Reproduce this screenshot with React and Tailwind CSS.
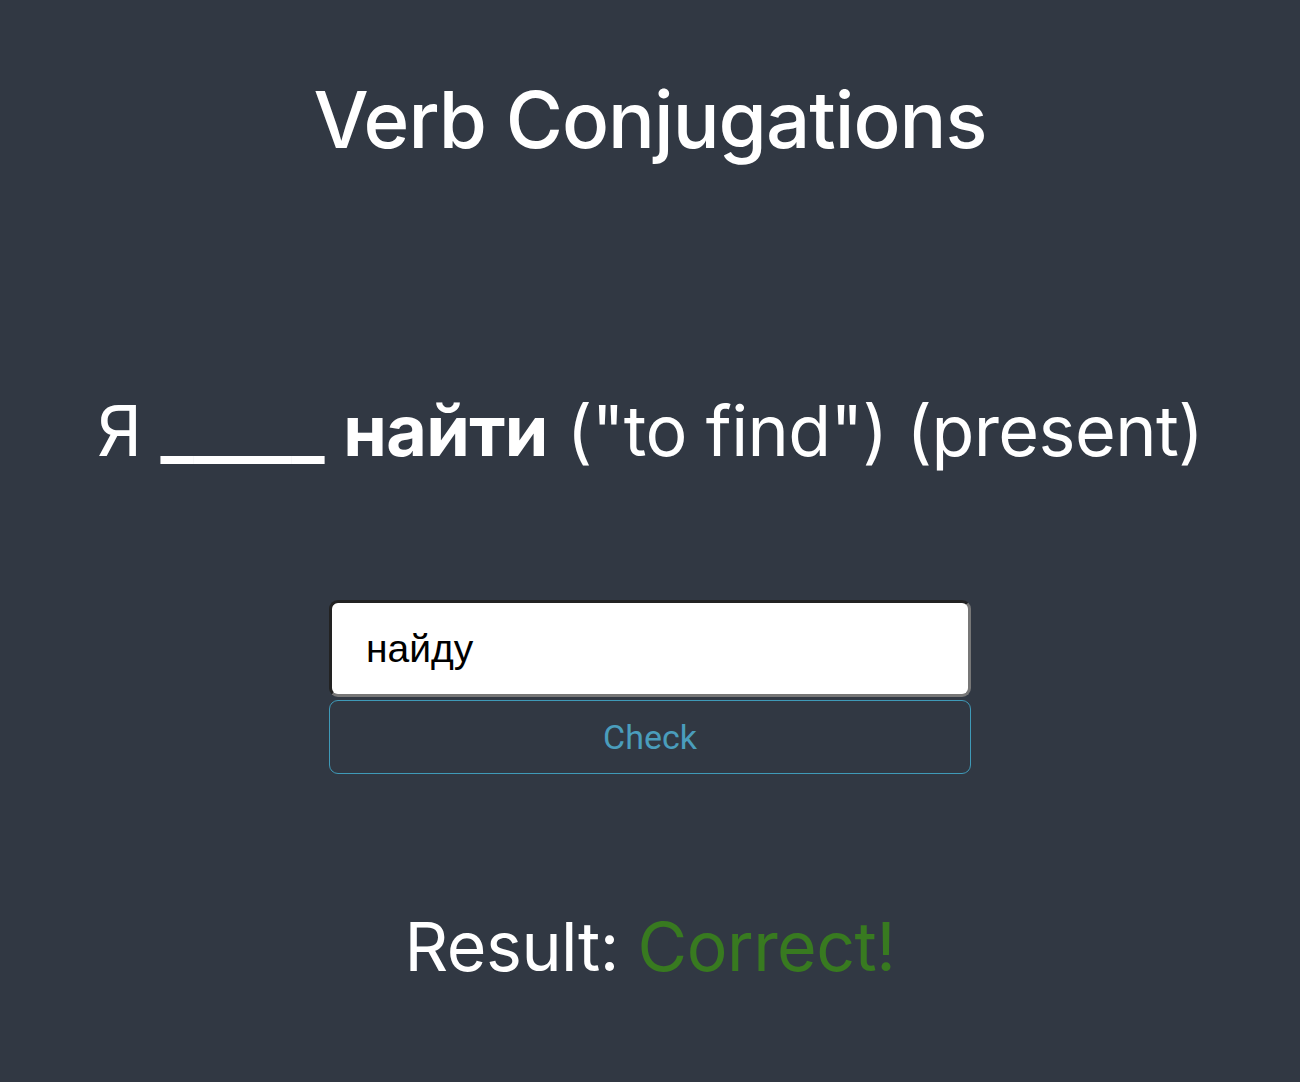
import React from "react";

export default function App() {
  return (
    <div className="min-h-[1082px] w-full bg-[#313843] text-white flex flex-col items-center" style={{ fontFamily: "Inter, 'Noto Sans', sans-serif" }}>
      <h1 className="mt-[70px] text-[78px] leading-[100px] font-medium tracking-[-1px]">Verb Conjugations</h1>
      <div className="mt-[216px] text-[70px] leading-[90px] whitespace-nowrap tracking-[-0.6px]">
        Я <span className="font-bold">_____</span> <span className="font-bold">найти</span> ("to find") (present)
      </div>
      <div className="mt-[124px] w-[642px] flex flex-col gap-[3px]">
        <input
          readOnly
          value="найду"
          className="h-[97px] w-full rounded-[9px] bg-white text-black text-[39px] px-[34px] outline-none border-[3px] border-t-[#222] border-l-[#222] border-r-[#777] border-b-[#777]"
          style={{ fontFamily: "'Liberation Sans', Arial, sans-serif" }}
        />
        <button className="h-[74px] w-full rounded-[9px] border-[1.5px] border-[#3f9ab8] text-[#4a9dbc] text-[34px]" style={{ fontFamily: "Roboto, 'Noto Sans', sans-serif" }}>
          Check
        </button>
      </div>
      <div className="mt-[127px] text-[68px] leading-[90px] tracking-[-0.5px]">
        Result: <span className="text-[#387a20]">Correct!</span>
      </div>
    </div>
  );
}
